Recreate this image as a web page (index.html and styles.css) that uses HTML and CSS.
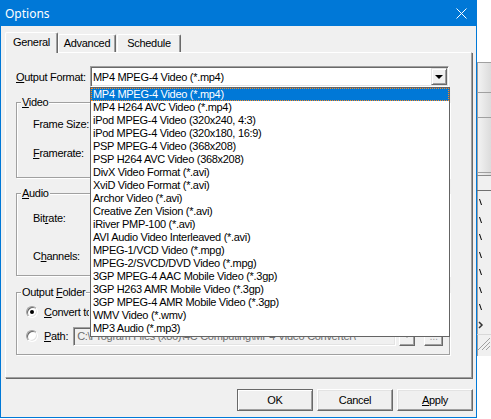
FILE: index.html
```html
<!DOCTYPE html>
<html>
<head>
<meta charset="utf-8">
<link rel="stylesheet" href="styles.css">
</head>
<body>
<div class="desktop">
  <div class="dialog">
    <div class="titlebar">
      <span class="title">Options</span>
      <svg class="close" width="11" height="11" viewBox="0 0 11 11"><path d="M0.5 0.5 L10.5 10.5 M10.5 0.5 L0.5 10.5" stroke="#fff" stroke-width="1" fill="none"/></svg>
    </div>
    <div class="content">
      <div class="tabs">
        <div class="tab selected">General</div>
        <div class="tab t-adv">Advanced</div>
        <div class="tab t-sch">Schedule</div>
      </div>
      <div class="panel">
        <div class="row-format">
          <span class="lbl-format"><u>O</u>utput Format:</span>
          <div class="combo">
            <span class="combo-text">MP4 MPEG-4 Video (*.mp4)</span>
            <span class="combo-btn"><span class="tri"></span></span>
          </div>
        </div>
        <div class="group g-video">
          <span class="legend"><u>V</u>ideo</span>
          <div class="grow r1">Frame Size:</div>
          <div class="grow r2"><u>F</u>ramerate:</div>
        </div>
        <div class="group g-audio">
          <span class="legend"><u>A</u>udio</span>
          <div class="grow r3">Bit<u>r</u>ate:</div>
          <div class="grow r4">C<u>h</u>annels:</div>
        </div>
        <div class="group g-out">
          <span class="legend">Output <u>F</u>older</span>
          <div class="orow o1"><span class="radio checked"></span><span class="otxt clip"><u>C</u>onvert to</span></div>
          <div class="orow o2"><span class="radio"></span><span class="otxt"><u>P</u>ath:</span>
            <span class="path">C:\Program Files (x86)\4C Computing\MP4 Video Converter\</span>
            <span class="sbtn small"><span class="tri gray"></span></span>
            <span class="sbtn dots">...</span>
          </div>
        </div>
      </div>
      <div class="buttons">
        <div class="btn default">OK</div>
        <div class="btn">Cancel</div>
        <div class="btn"><u>A</u>pply</div>
      </div>
    </div>
    <div class="droplist">
      <div class="item sel">MP4 MPEG-4 Video (*.mp4)</div>
      <div class="item">MP4 H264 AVC Video (*.mp4)</div>
      <div class="item">iPod MPEG-4 Video (320x240, 4:3)</div>
      <div class="item">iPod MPEG-4 Video (320x180, 16:9)</div>
      <div class="item">PSP MPEG-4 Video (368x208)</div>
      <div class="item">PSP H264 AVC Video (368x208)</div>
      <div class="item">DivX Video Format (*.avi)</div>
      <div class="item">XviD Video Format (*.avi)</div>
      <div class="item">Archor Video (*.avi)</div>
      <div class="item">Creative Zen Vision (*.avi)</div>
      <div class="item">iRiver PMP-100 (*.avi)</div>
      <div class="item">AVI Audio Video Interleaved (*.avi)</div>
      <div class="item">MPEG-1/VCD Video (*.mpg)</div>
      <div class="item">MPEG-2/SVCD/DVD Video (*.mpg)</div>
      <div class="item">3GP MPEG-4 AAC Mobile Video (*.3gp)</div>
      <div class="item">3GP H263 AMR Mobile Video (*.3gp)</div>
      <div class="item">3GP MPEG-4 AMR Mobile Video (*.3gp)</div>
      <div class="item">WMV Video (*.wmv)</div>
      <div class="item">MP3 Audio (*.mp3)</div>
    </div>
  </div>
  <svg class="bgwin" width="14" height="294" viewBox="0 0 14 294">
    <defs>
      <linearGradient id="g1" x1="0" y1="0" x2="1" y2="0">
        <stop offset="0" stop-color="#f4f4f4"/>
        <stop offset="1" stop-color="#dcdcdc"/>
      </linearGradient>
    </defs>
    <rect x="0" y="0" width="14" height="294" fill="#f0f0f0"/>
    <rect x="0" y="0" width="14" height="113" fill="url(#g1)"/>
    <path d="M0 0.5 H14 M0.5 0 V294" stroke="#a0a0a0"/>
    <path d="M0 30.5 H14 M0 55.5 H14 M0 110.5 H14" stroke="#a0a0a0"/>
    <path d="M0 113.5 H14" stroke="#8a8a8a"/>
    <path d="M0 128.5 H14" stroke="#707070"/>
    <g stroke="#000" stroke-width="1">
      <path d="M2.5 137 L4.5 143"/>
      <path d="M2.5 155 L4.5 161"/>
      <path d="M2.5 172 L4.5 178"/>
      <path d="M2.5 190 L4.5 196"/>
      <path d="M2.5 207 L4.5 213"/>
      <path d="M2.5 225 L4.5 231"/>
      <path d="M2.5 242 L4.5 248"/>
    </g>
    <path d="M2 260 L5 263 L2 266" stroke="#333" stroke-width="1.5" fill="none"/>
    <path d="M0 272.5 H14" stroke="#d8d8d8"/>
    <g stroke="#a0a0a0">
      <path d="M13 280 L5 288 M13 284 L9 288 M13 276 L1 288"/>
    </g>
  </svg>
</div>
</body>
</html>
```
FILE: styles.css
```css
html, body {
  margin: 0;
  padding: 0;
  background: #fff;
}
body {
  width: 491px;
  height: 419px;
  overflow: hidden;
  font-family: "Liberation Sans", Arial, sans-serif;
  font-size: 11px;
  letter-spacing: -0.3px;
  color: #000;
}
.desktop {
  position: relative;
  width: 491px;
  height: 419px;
}
u { text-decoration: underline; text-underline-offset: 1px; }

.dialog {
  position: relative;
  width: 477px;
  height: 418px;
  box-sizing: border-box;
  border: 1px solid #0078d7;
  background: #f0f0f0;
  display: flex;
  flex-direction: column;
}
.titlebar {
  height: 25px;
  background: #0078d7;
  display: flex;
  align-items: center;
  justify-content: space-between;
  padding: 0 9px 0 4px;
  flex: none;
}
.title {
  font-family: "Noto Sans", "Open Sans", sans-serif;
  font-size: 12px;
  letter-spacing: 0;
  color: #fff;
  margin-top: -1px;
}
.close { display: block; }

.content {
  padding: 6px 0 0 4px;
  flex: 1;
}
.tabs {
  display: flex;
  align-items: flex-end;
  height: 20px;
}
.tab {
  box-sizing: border-box;
  height: 18px;
  border-left: 1px solid #fff;
  border-top: 1px solid #fff;
  border-right: 1px solid #696969;
  box-shadow: inset -1px 0 0 #a0a0a0;
  padding: 2px 0 0 0;
  text-align: center;
  line-height: 13px;
  border-radius: 2px 2px 0 0;
}
.tab.selected {
  width: 53px;
  height: 21px;
  margin-bottom: -1px;
  position: relative;
  z-index: 1;
  background: #f0f0f0;
  padding-top: 3px;
}
.t-adv { width: 58px; margin-left: 0; }
.t-sch { width: 64px; margin-left: 1px; }

.panel {
  box-sizing: border-box;
  width: 467px;
  height: 326px;
  border-left: 1px solid #fff;
  border-top: 1px solid #fff;
  border-right: 1px solid #a0a0a0;
  border-bottom: 1px solid #a0a0a0;
  box-shadow: 1px 1px 0 #696969;
  padding: 13px 0 0 10px;
}
.row-format {
  display: flex;
  align-items: center;
  height: 21px;
}
.lbl-format {
  width: 74px;
  flex: none;
}
.combo {
  box-sizing: border-box;
  width: 359px;
  height: 21px;
  border: 1px solid;
  border-color: #a0a0a0 #fff #fff #a0a0a0;
  box-shadow: inset 1px 1px 0 #696969, inset -1px -1px 0 #e3e3e3;
  background: #fff;
  display: flex;
  align-items: center;
  padding: 0 1px 0 2px;
}
.combo-text { flex: 1; }
.combo-btn {
  box-sizing: border-box;
  width: 16px;
  height: 17px;
  background: #f0f0f0;
  border: 1px solid;
  border-color: #e3e3e3 #696969 #696969 #e3e3e3;
  box-shadow: inset 1px 1px 0 #fff, inset -1px -1px 0 #a0a0a0;
  display: flex;
  align-items: center;
  justify-content: center;
}
.tri {
  width: 0;
  height: 0;
  border-left: 4px solid transparent;
  border-right: 4px solid transparent;
  border-top: 4px solid #000;
}
.tri.gray { border-top-color: #a0a0a0; }

.group {
  box-sizing: border-box;
  width: 434px;
  border: 1px solid #a0a0a0;
  box-shadow: inset 1px 1px 0 #fff, 1px 1px 0 #fff;
  display: flex;
  flex-direction: column;
  align-items: flex-start;
}
.legend {
  display: block;
  line-height: 13px;
  height: 13px;
  margin: -7px 0 0 4px;
  padding: 0 1px;
  background: #f0f0f0;
}
.g-video { height: 76px; margin-top: 15px; }
.g-audio { height: 83px; margin-top: 15px; }
.g-out { height: 63px; margin-top: 16px; }
.grow {
  height: 21px;
  line-height: 21px;
  margin-left: 16px;
}
.r1 { margin-top: 5px; }
.r2 { margin-top: 8px; }
.r3 { margin-top: 8px; }
.r4 { margin-top: 17px; }

.orow {
  display: flex;
  align-items: center;
  height: 20px;
  margin-left: 9px;
  width: 424px;
}
.o1 { margin-top: 3px; }
.o2 { margin-top: 4px; }
.radio {
  box-sizing: border-box;
  width: 12px;
  height: 12px;
  border-radius: 50%;
  background: #fff;
  border: 1px solid;
  border-color: #a0a0a0 #fff #fff #a0a0a0;
  box-shadow: inset 1px 1px 0 #696969, inset -1px -1px 0 #e3e3e3;
  display: flex;
  align-items: center;
  justify-content: center;
  flex: none;
}
.radio.checked::after {
  content: "";
  width: 4px;
  height: 4px;
  border-radius: 50%;
  background: #000;
}
.otxt {
  margin-left: 6px;
}
.otxt.clip {
  width: 45px;
  overflow: hidden;
  white-space: nowrap;
}
.path {
  box-sizing: border-box;
  margin-left: 5px;
  width: 323px;
  height: 19px;
  line-height: 17px;
  border: 1px solid;
  border-color: #a0a0a0 #fff #fff #a0a0a0;
  box-shadow: inset 1px 1px 0 #696969, inset -1px -1px 0 #e3e3e3;
  background: #f0f0f0;
  color: #6d6d6d;
  padding-left: 3px;
  white-space: nowrap;
  overflow: hidden;
}
.sbtn {
  box-sizing: border-box;
  height: 19px;
  background: #f0f0f0;
  border: 1px solid;
  border-color: #fff #696969 #696969 #fff;
  box-shadow: inset -1px -1px 0 #a0a0a0;
  display: flex;
  align-items: center;
  justify-content: center;
  color: #a0a0a0;
}
.sbtn.small { width: 16px; margin-left: 3px; }
.sbtn.dots { width: 19px; margin-left: 9px; line-height: 10px; }

.buttons {
  display: flex;
  justify-content: flex-end;
  gap: 4px;
  margin-top: 11px;
  padding-right: 3px;
}
.btn {
  box-sizing: border-box;
  width: 76px;
  height: 22px;
  border: 1px solid;
  border-color: #fff #696969 #696969 #fff;
  box-shadow: inset -1px -1px 0 #a0a0a0, inset 1px 1px 0 #e3e3e3;
  display: flex;
  align-items: center;
  justify-content: center;
}
.btn.default {
  border-color: #696969;
  box-shadow: inset 1px 1px 0 #fff, inset -1px -1px 0 #a0a0a0;
}

.droplist {
  position: absolute;
  left: 89px;
  top: 86px;
  width: 360px;
  box-sizing: border-box;
  background: #fff;
  border: 1px solid #646464;
  padding-bottom: 1px;
  z-index: 5;
}
.item {
  height: 13px;
  line-height: 13px;
  padding-left: 2px;
  white-space: nowrap;
  box-sizing: border-box;
}
.item.sel {
  background: #0078d7;
  color: #fff;
  outline: 1px dotted #ff8a1e;
  outline-offset: -1px;
}

.bgwin {
  position: absolute;
  left: 477px;
  top: 62px;
  display: block;
}
```
